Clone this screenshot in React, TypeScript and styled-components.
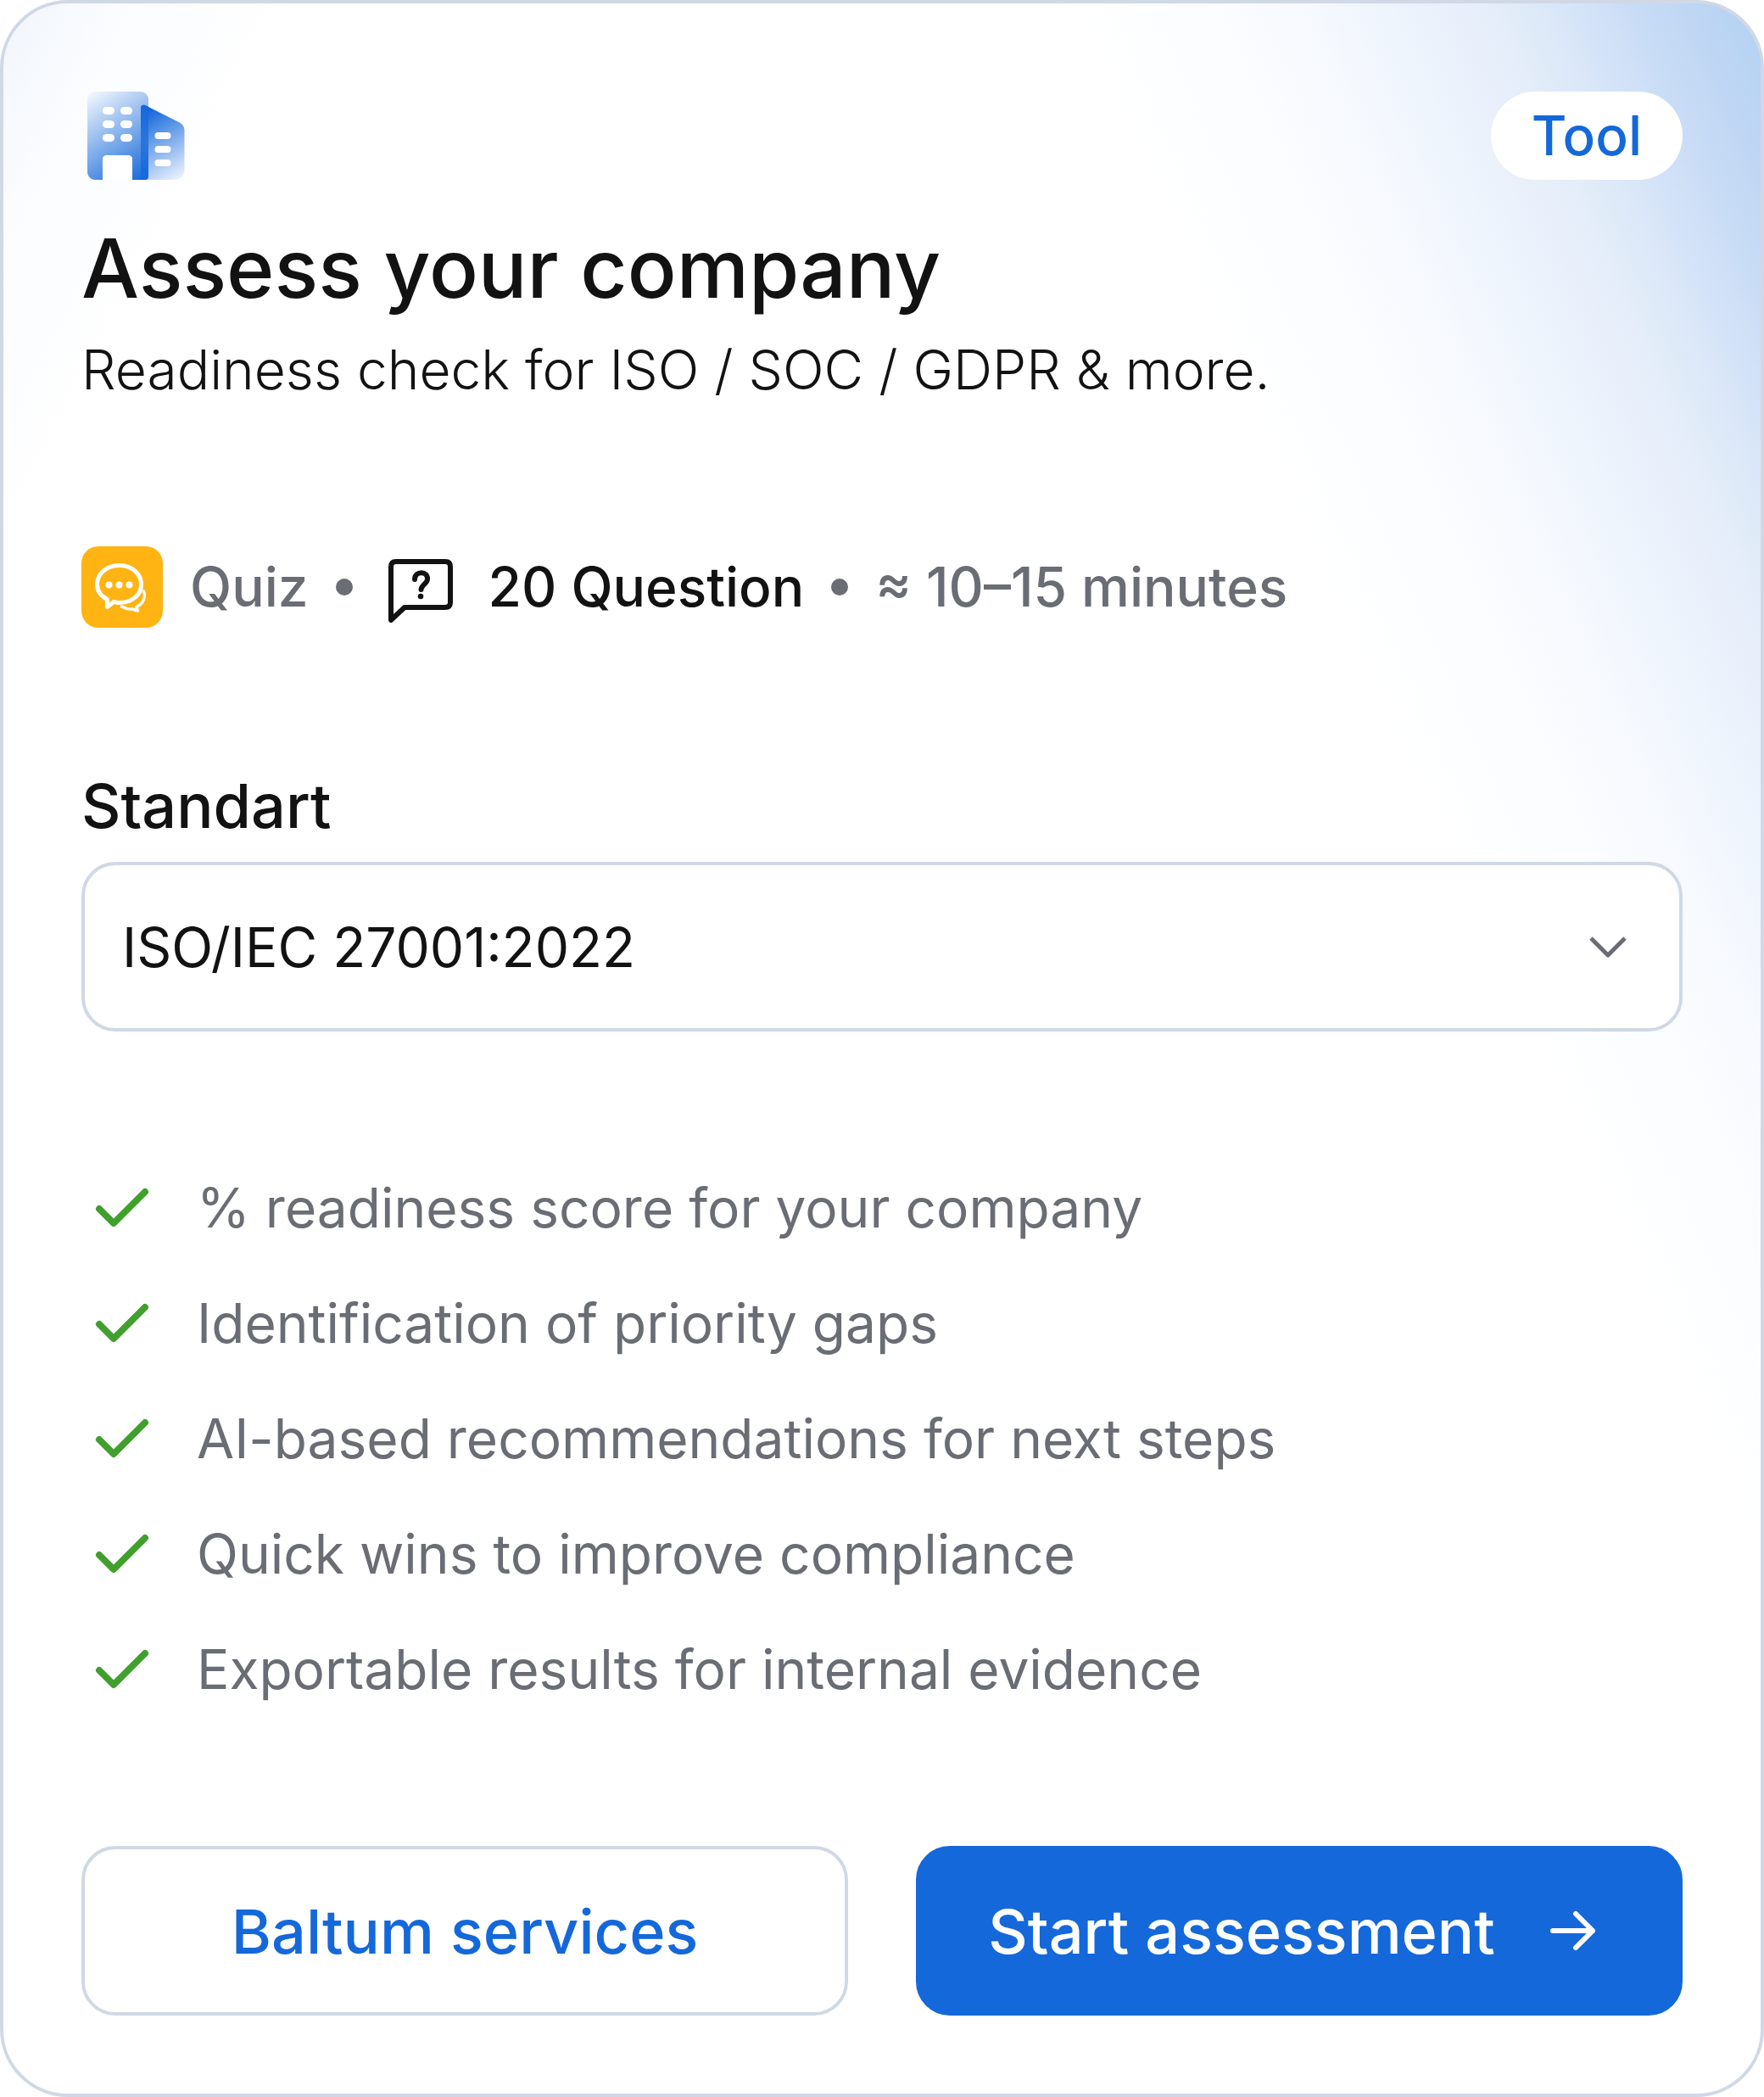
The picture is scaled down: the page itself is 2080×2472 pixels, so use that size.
import React from "react";
import styled, { createGlobalStyle } from "styled-components";

const GlobalStyle = createGlobalStyle`
  *, *::before, *::after { box-sizing: border-box; }
  body {
    margin: 0;
    background: #ffffff;
    font-family: Inter, "Liberation Sans", sans-serif;
    font-optical-sizing: none;
    color: #121212;
  }
`;

const Card = styled.main`
  min-height: 100vh;
  display: flex;
  flex-direction: column;
  padding: 104px 92px 92px;
  border: 4px solid #d1d8e5;
  border-radius: 80px;
  background:
    linear-gradient(117deg, rgba(20, 104, 218, 0.06) 0, rgba(20, 104, 218, 0.02) 130px, rgba(20, 104, 218, 0) 320px),
    linear-gradient(246deg, #b3d0f2 0, #bad4f3 50px, #c7dbf5 130px, #d4e3f8 195px, #dde9f8 245px, #e4edf9 290px, #e9f0fb 340px, #eff5fd 410px, #f6f9fe 490px, #fafcff 580px, #fdfeff 680px, #ffffff 760px);
`;

const TopBar = styled.header`
  display: flex;
  align-items: flex-start;
  justify-content: space-between;
`;

const Badge = styled.span`
  display: flex;
  align-items: center;
  height: 104px;
  padding: 0 48px;
  border-radius: 52px;
  background: #ffffff;
  color: #1468da;
  font-size: 64px;
  font-weight: 500;
  line-height: 80px;
`;

const Title = styled.h1`
  margin: 44px 0 0;
  font-size: 96px;
  font-weight: 500;
  line-height: 120px;
`;

const Subtitle = styled.p`
  margin: 20px 0 0;
  font-size: 64px;
  font-weight: 300;
  line-height: 80px;
`;

const Meta = styled.div`
  display: flex;
  align-items: center;
  gap: 32px;
  margin-top: 168px;
  color: #6a6d73;
  font-size: 64px;
  font-weight: 500;
  line-height: 80px;
`;

const QuizTile = styled.span`
  display: flex;
  width: 96px;
  height: 96px;
  border-radius: 20px;
  background: #ffb414;
`;

const Dot = styled.span`
  width: 20px;
  height: 20px;
  border-radius: 50%;
  background: currentColor;
`;

const Questions = styled.span`
  display: flex;
  align-items: center;
  gap: 32px;
  color: #121212;
`;

const Field = styled.div`
  display: flex;
  flex-direction: column;
  margin-top: 164px;
`;

const Label = styled.label`
  font-size: 72px;
  font-weight: 500;
  line-height: 92px;
`;

const SelectBox = styled.div`
  display: grid;
  align-items: center;
  margin-top: 20px;

  & > * { grid-area: 1 / 1; }
  & > svg { justify-self: end; margin-right: 56px; pointer-events: none; }
`;

const Select = styled.select`
  appearance: none;
  width: 100%;
  height: 200px;
  padding: 0 44px;
  border: 4px solid #d1d8e5;
  border-radius: 40px;
  background: #ffffff;
  color: #121212;
  font: inherit;
  font-size: 64px;
`;

const Benefits = styled.ul`
  display: flex;
  flex-direction: column;
  gap: 56px;
  margin: 168px 0 0;
  padding: 0;
  list-style: none;
`;

const Benefit = styled.li`
  display: flex;
  align-items: center;
  gap: 40px;
  color: #6a6d73;
  font-size: 64px;
  line-height: 80px;
`;

const Actions = styled.footer`
  display: grid;
  grid-template-columns: 1fr 1fr;
  gap: 80px;
  margin-top: 168px;
`;

const Button = styled.button<{ $primary?: boolean }>`
  display: flex;
  align-items: center;
  justify-content: center;
  gap: 40px;
  height: 200px;
  padding: 0;
  border: 4px solid ${(p) => (p.$primary ? "#1468da" : "#d1d8e5")};
  border-radius: 40px;
  background: ${(p) => (p.$primary ? "#1468da" : "#ffffff")};
  color: ${(p) => (p.$primary ? "#ffffff" : "#1468da")};
  font: inherit;
  font-size: 72px;
  font-weight: 500;
`;

const BuildingIcon = () => (
  <svg width="128" height="104" viewBox="0 0 128 104" aria-hidden="true">
    <defs>
      <linearGradient id="tower" x1="8" y1="2" x2="76" y2="104" gradientUnits="userSpaceOnUse">
        <stop stopColor="#f3f8fd" />
        <stop offset="1" stopColor="#1468da" />
      </linearGradient>
      <linearGradient id="annex" x1="70" y1="28" x2="116" y2="104" gradientUnits="userSpaceOnUse">
        <stop stopColor="#1468da" />
        <stop offset="1" stopColor="#eef4fd" />
      </linearGradient>
      <linearGradient id="seam" x1="70" y1="16" x2="70" y2="104" gradientUnits="userSpaceOnUse">
        <stop stopColor="#1468da" />
        <stop offset="0.5" stopColor="#2b76dc" />
        <stop offset="1" stopColor="#1468da" />
      </linearGradient>
    </defs>
    <path d="M16 0H70a9 9 0 0 1 9 9V104H60V80q0-5-6-5H31q-6 0-6 5v24H16a9 9 0 0 1-9-9V9a9 9 0 0 1 9-9Z" fill="url(#tower)" />
    <path d="M25 104V80q0-5 6-5H54q6 0 6 5v24Z" fill="#fff" />
    <path d="M70 20q0-5 5-4L115 36q6 3 6.500 9V91q0 13-13 13H70Z" fill="url(#annex)" />
    <path d="M70 20q0-5 5-4l4 2V100q0 4-4 4H70Z" fill="url(#seam)" />
    <g fill="#fff">
      {[18, 34, 50].map((y) => (
        <React.Fragment key={y}>
          <rect x="25" y={y} width="14" height="9" rx="4.500" />
          <rect x="46" y={y} width="14" height="9" rx="4.500" />
        </React.Fragment>
      ))}
      {[48, 64, 80].map((y) => (
        <rect key={y} x="86.500" y={y} width="19" height="8" rx="4" />
      ))}
    </g>
  </svg>
);

const ChatIcon = () => (
  <svg width="96" height="96" viewBox="0 0 96 96" fill="none" stroke="#fff" strokeWidth="5" strokeLinecap="round" strokeLinejoin="round" aria-hidden="true">
    <path d="M30.500 71.500V62.500C22 58 18.500 52 18.500 45 18.500 32 30 22.500 44.500 22.500S70.500 32 70.500 45 59 66.500 44.500 66.500C42 66.500 40 66 38 65.500Z" />
    <path d="M73.500 53C76 60 73 67 65 71.500L66.500 76 60 74C55 74.500 51 73 47.500 71" strokeWidth="3.500" />
    <g fill="#fff" stroke="none">
      <circle cx="32.500" cy="45.500" r="4" />
      <circle cx="44.500" cy="45.500" r="4" />
      <circle cx="56.500" cy="45.500" r="4" />
    </g>
  </svg>
);

const QuestionIcon = () => (
  <svg width="96" height="96" viewBox="0 0 96 96" fill="none" stroke="#121212" strokeWidth="6" strokeLinecap="round" strokeLinejoin="round" aria-hidden="true">
    <path d="M13 87V24q0-6 6-6H77q6 0 6 6V66q0 6-6 6H29L13 87Z" />
    <path d="M41 39C41 28.500 57 28.500 56 39 55.500 44 48.500 46 48.500 51" />
    <circle cx="48" cy="59" r="3.300" fill="#121212" stroke="none" />
  </svg>
);

const ChevronIcon = () => (
  <svg width="64" height="64" viewBox="0 0 64 64" fill="none" stroke="#6a6d73" strokeWidth="5" strokeLinejoin="round" aria-hidden="true">
    <path d="M12 22 32 42 52 22" />
  </svg>
);

const CheckIcon = () => (
  <svg width="96" height="80" viewBox="0 0 96 80" fill="none" stroke="#41a02d" strokeWidth="8" strokeLinecap="round" strokeLinejoin="round" aria-hidden="true">
    <path d="M21 41 38 58 75 21" />
  </svg>
);

const ArrowIcon = () => (
  <svg width="96" height="96" viewBox="0 0 96 96" fill="none" stroke="#fff" strokeWidth="6" strokeLinecap="round" strokeLinejoin="round" aria-hidden="true">
    <path d="M28 48H75M55 28 75 48 55 68" />
  </svg>
);

const benefits = [
  "% readiness score for your company",
  "Identification of priority gaps",
  "AI-based recommendations for next steps",
  "Quick wins to improve compliance",
  "Exportable results for internal evidence",
];

export default function App() {
  return (
    <>
      <GlobalStyle />
      <Card>
        <TopBar>
          <BuildingIcon />
          <Badge>Tool</Badge>
        </TopBar>
        <Title>Assess your company</Title>
        <Subtitle>Readiness check for ISO / SOC / GDPR &amp; more.</Subtitle>
        <Meta>
          <QuizTile><ChatIcon /></QuizTile>
          <span>Quiz</span>
          <Dot />
          <Questions><QuestionIcon /><span>20 Question</span></Questions>
          <Dot />
          <span>≈ 10–15 minutes</span>
        </Meta>
        <Field>
          <Label htmlFor="standard">Standart</Label>
          <SelectBox>
            <Select id="standard" defaultValue="27001">
              <option value="27001">ISO/IEC 27001:2022</option>
            </Select>
            <ChevronIcon />
          </SelectBox>
        </Field>
        <Benefits>
          {benefits.map((text) => (
            <Benefit key={text}><CheckIcon /><span>{text}</span></Benefit>
          ))}
        </Benefits>
        <Actions>
          <Button type="button">Baltum services</Button>
          <Button type="button" $primary>Start assessment<ArrowIcon /></Button>
        </Actions>
      </Card>
    </>
  );
}
